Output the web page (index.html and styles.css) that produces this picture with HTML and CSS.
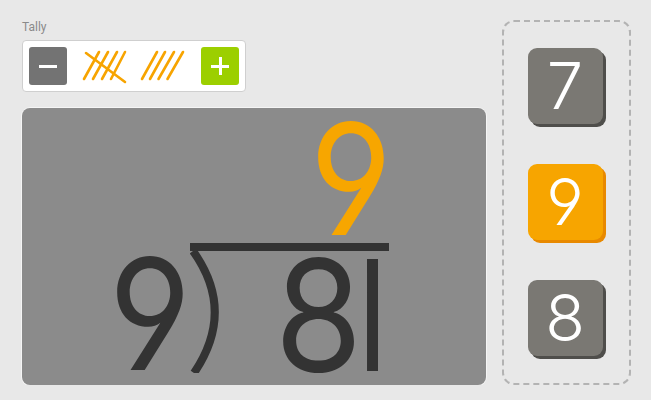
FILE: index.html
```html
<!DOCTYPE html>
<html lang="en">
<head>
<meta charset="utf-8">
<title>Tally division</title>
<link rel="stylesheet" href="styles.css">
</head>
<body>
<div class="page">
  <div class="left">
    <div class="label">Tally</div>
    <div class="tally">
      <div class="btn btn-minus"><span class="bar-h"></span></div>
      <svg class="marks marks-a" width="50" height="38" viewBox="0 0 50 38">
        <g stroke="#f7a400" stroke-width="2.6" stroke-linecap="round">
          <line x1="4" y1="32" x2="19" y2="5"/>
          <line x1="13" y1="32" x2="28" y2="5"/>
          <line x1="22" y1="32" x2="37" y2="5"/>
          <line x1="31" y1="32" x2="45" y2="5"/>
          <line x1="6" y1="6" x2="45" y2="35"/>
        </g>
      </svg>
      <svg class="marks marks-b" width="50" height="38" viewBox="0 0 50 38">
        <g stroke="#f7a400" stroke-width="2.6" stroke-linecap="round">
          <line x1="5" y1="32" x2="20" y2="5"/>
          <line x1="13" y1="32" x2="28" y2="5"/>
          <line x1="21.5" y1="32" x2="37" y2="5"/>
          <line x1="30.5" y1="32" x2="46" y2="5"/>
        </g>
      </svg>
      <div class="btn btn-plus"><span class="bar-h"></span><span class="bar-v"></span></div>
    </div>
    <div class="board">
      <div class="division">
        <div class="quotient"><span class="digit">9</span></div>
        <div class="divisor"><span class="digit">9</span></div>
        <div class="house">
          <svg class="curve" width="34" height="122" viewBox="0 0 34 122">
            <path d="M3 0 Q 46 60 4 122" fill="none" stroke="#333" stroke-width="8"/>
          </svg>
          <span class="digit d8">8</span><span class="one"><span class="one-glyph">1</span></span>
        </div>
      </div>
    </div>
  </div>
  <div class="tray">
    <div class="tile tile-gray">7</div>
    <div class="tile tile-orange">9</div>
    <div class="tile tile-gray">8</div>
  </div>
</div>
</body>
</html>
```

FILE: styles.css
```css
html, body {
  margin: 0;
  padding: 0;
  background: #e8e8e8;
}
body {
  font-family: "Roboto", "Liberation Sans", sans-serif;
}
.page {
  display: flex;
  align-items: flex-start;
  padding: 20px 0 0 22px;
  gap: 16px;
}
.left {
  width: 464px;
  display: flex;
  flex-direction: column;
  align-items: flex-start;
}
.label {
  font-size: 12px;
  line-height: 14px;
  color: #8a8a8a;
  margin-bottom: 6px;
}
.tally {
  display: flex;
  align-items: center;
  background: #fff;
  border: 1px solid #cfcfcf;
  border-radius: 4px;
  padding: 6px;
  width: 210px;
}
.btn {
  width: 38px;
  height: 38px;
  border-radius: 3px;
  position: relative;
  flex: none;
}
.btn-minus { background: #737373; }
.btn-plus { background: #9ccf00; }
.bar-h, .bar-v {
  position: absolute;
  background: #fff;
}
.bar-h {
  left: 10px;
  width: 18px;
  top: 18px;
  height: 3px;
}
.bar-v {
  top: 10px;
  height: 18px;
  left: 17.5px;
  width: 3px;
}
.marks { flex: none; display: block; }
.marks-a { margin-left: 13px; }
.marks-b { margin-left: 7px; margin-right: 14px; }
.board {
  margin-top: 16px;
  width: 464px;
  height: 277px;
  background: #8b8b8b;
  border-radius: 8px;
  box-shadow: 0 0 0 1px rgba(255,255,255,0.55);
  box-sizing: border-box;
  padding: 11px 0 0 90px;
}
.division {
  display: grid;
  grid-template-columns: 78px 199px;
  font-family: "Inter", "DejaVu Sans", sans-serif;
  font-weight: 370;
  font-size: 154px;
  line-height: 120px;
  font-feature-settings: "cv04", "ss01";
  color: #333;
}
.digit {
  display: inline-block;
  width: 70px;
  text-align: center;
  transform: scaleX(0.92);
}
.quotient {
  grid-column: 2;
  padding-left: 117px;
  color: #f7a600;
}
.divisor {
  grid-column: 1;
  padding-top: 15px;
  margin-left: -6px;
}
.house {
  grid-column: 2;
  margin-top: 4px;
  border-top: 8px solid #333;
  display: flex;
  align-items: flex-start;
}
.curve { display: block; flex: none; }
.d8 {
  margin-left: 48px;
  padding-top: 4px;
  flex: none;
}
.one {
  display: inline-block;
  flex: none;
  width: 11px;
  overflow: hidden;
  margin-left: 25px;
  padding-top: 4px;
}
.one-glyph {
  display: inline-block;
  margin-left: -35px;
}
.tray {
  width: 129px;
  height: 365px;
  box-sizing: border-box;
  border: 2px dashed #b3b3b3;
  border-radius: 12px;
  display: flex;
  flex-direction: column;
  align-items: center;
  padding-top: 26px;
  gap: 40px;
}
.tile {
  width: 75px;
  height: 76px;
  margin-left: -3px;
  border-radius: 9px;
  color: #fff;
  font-family: "Inter", "DejaVu Sans", sans-serif;
  font-weight: 300;
  font-size: 65px;
  line-height: 76px;
  text-align: center;
  font-feature-settings: "cv04", "ss01";
}
.tile-gray {
  background: #7a7873;
  box-shadow: 3px 3px 0 #4f4e4b;
}
.tile-orange {
  background: #f7a500;
  box-shadow: 3px 3px 0 #e88900;
}
```
